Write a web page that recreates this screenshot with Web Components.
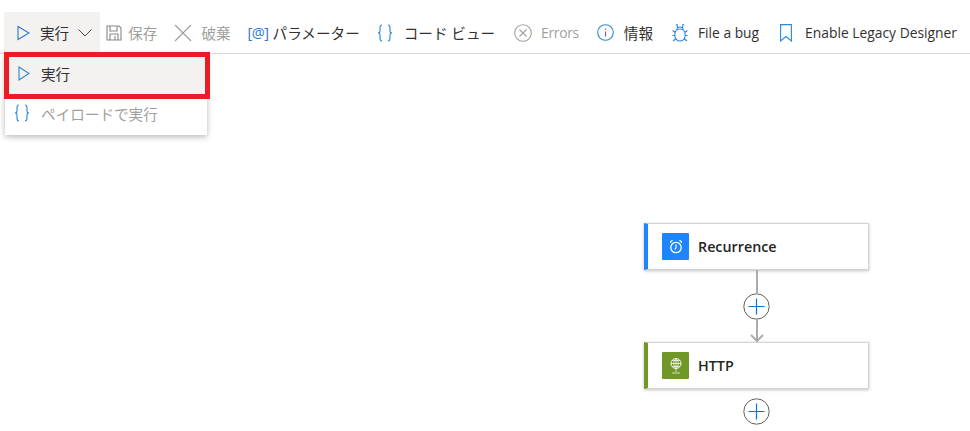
<!DOCTYPE html>
<html lang="ja">
<head>
<meta charset="utf-8">
<title>Designer</title>
<style>
html, body { margin: 0; height: 100%; background: #fff; overflow: hidden; }
body { font-family: "Open Sans", "Noto Sans CJK JP", sans-serif; font-size: 14px; color: #323130; }
svg { display: block; fill: none; }
</style>
</head>
<body>
<template id="bar-tpl">
  <style>
    :host { display: flex; align-items: flex-end; height: 53px; border-bottom: 1px solid #d8d8d8; padding-left: 4px; }
  </style>
  <slot></slot>
</template>
<template id="btn-tpl">
  <style>
    :host { display: flex; align-items: center; height: 41px; gap: var(--gap, 9px); margin-left: var(--ml, 0); white-space: nowrap; color: #323130; font-size: var(--fs, 14.6px); }
    :host([disabled]) { color: #a19f9d; }
    :host([open]) { background: #f3f2f1; padding: 0 8px 0 13px; }
    .label { line-height: 20px; letter-spacing: var(--ls, 0); }
    ::slotted([slot="after"]) { margin-left: -1px; }
  </style>
  <slot name="icon"></slot><span class="label"><slot></slot></span><slot name="after"></slot>
</template>
<template id="menu-tpl">
  <style>
    :host { position: absolute; left: 5px; top: 54px; width: 202px; height: 81px; background: #fff; box-shadow: 0 2px 6px rgba(0,0,0,.28); display: block; z-index: 2; font-size: 14.6px; }
    .hl { position: absolute; left: -1px; top: -2px; width: 206px; height: 47px; box-sizing: border-box; border: 5px solid #ed1c24; background: #f3f2f1; }
    .row { position: relative; display: flex; align-items: center; padding-left: 13px; gap: 11px; }
    .one { height: 41px; margin-top: -1px; }
    .two { position: absolute; top: 39px; left: 0; right: 0; color: #a19f9d; padding-left: 9px; gap: 11px; height: 40px; }
  </style>
  <div class="hl"></div>
  <div class="row one"><slot name="first-icon"></slot><span><slot name="first"></slot></span></div>
  <div class="row two"><slot name="second-icon"></slot><span><slot name="second"></slot></span></div>
</template>
<template id="canvas-tpl">
  <style>
    :host { display: flex; flex-direction: column; align-items: center; width: 225px; margin-left: 644px; padding-top: 169px; }
    .line { width: 2px; background: #adadb0; }
    svg { display: block; fill: none; }
    .plus { flex: none; width: 27px; height: 27px; background: #fff; }
    .head { margin-top: -8px; margin-bottom: 0; }
  </style>
  <slot name="first"></slot>
  <div class="line" style="height:23px"></div>
  <svg class="plus" viewBox="0 0 27 27"><circle cx="13.500" cy="13.500" r="12.700" stroke="#605e5c" fill="#fff"/><path d="M13.500 5.500v16M5.500 13.500h16" stroke="#0078d4" stroke-width="1.200"/></svg>
  <div class="line" style="height:22px"></div>
  <svg class="head" width="14" height="8" viewBox="0 0 14 8"><path d="M1 1l6 6 6-6" stroke="#adadb0" stroke-width="2"/></svg>
  <slot name="second"></slot>
  <div style="height:9px"></div>
  <svg class="plus" viewBox="0 0 27 27"><circle cx="13.500" cy="13.500" r="12.700" stroke="#605e5c" fill="#fff"/><path d="M13.500 5.500v16M5.500 13.500h16" stroke="#0078d4" stroke-width="1.200"/></svg>
</template>
<template id="card-tpl">
  <style>
    :host { display: flex; align-items: center; box-sizing: border-box; width: 225px; height: 47px; background: #fff; border: 1px solid #d4d4d4; border-left: 4px solid var(--accent, #1f85ff); box-shadow: 0 1px 3px rgba(0,0,0,.25); padding-left: 14px; gap: 9px; font-weight: 600; font-size: 14.3px; color: #252423; }
    .tile { width: 27px; height: 27px; border-radius: 1px; background: var(--accent, #1f85ff); display: flex; align-items: center; justify-content: center; }
  </style>
  <div class="tile"><slot name="icon"></slot></div>
  <span><slot></slot></span>
</template>

<tool-bar>
  <tool-button open style="--gap:10px">
    <svg slot="icon" width="13" height="16" viewBox="0 0 13 16"><path d="M1 1.500v13l11-6.500z" stroke="#2b78c5" stroke-width="1.100"/></svg>
    実行
    <svg slot="after" width="14" height="8" viewBox="0 0 14 8"><path d="M.5.500L7 7 13.500.500" stroke="#323130" stroke-width=".9"/></svg>
  </tool-button>
  <tool-button disabled style="--ml:6px;--gap:6px">
    <svg slot="icon" width="16" height="16" viewBox="0 0 16 16"><path d="M1 1h12l2 2v12H1zM4 1v5h7V1M4 15V9h8v6M9 11v4" stroke="#8a8886" stroke-width="1.100"/></svg>
    保存
  </tool-button>
  <tool-button disabled style="--ml:17px;--gap:9px">
    <svg slot="icon" width="18" height="18" viewBox="0 0 18 18"><path d="M1 1l16 16M17 1L1 17" stroke="#a19f9d" stroke-width="1.100"/></svg>
    破棄
  </tool-button>
  <tool-button style="--ml:17px;--gap:5px">
    <span slot="icon" style="color:#2b78c5;font-size:14.500px;line-height:20px;width:20px;letter-spacing:-.5px">[@]</span>
    パラメーター
  </tool-button>
  <tool-button style="--ml:17px;--gap:11px">
    <svg slot="icon" width="16" height="18" viewBox="0 0 16 18"><path d="M5 1C3 1 3 2 3 4v3c0 1-.5 2-2 2 1.500 0 2 1 2 2v3c0 2 0 3 2 3M11 1c2 0 2 1 2 3v3c0 1 .5 2 2 2-1.500 0-2 1-2 2v3c0 2 0 3-2 3" stroke="#2b88d8" stroke-width="1.100"/></svg>
    コード ビュー
  </tool-button>
  <tool-button disabled style="--ml:19px;--gap:9px;--fs:13.800px;--ls:-.3px">
    <svg slot="icon" width="18" height="18" viewBox="0 0 18 18"><circle cx="9" cy="9" r="8.300" stroke="#a19f9d" stroke-width="1.100"/><path d="M5.500 5.500l7 7M12.500 5.500l-7 7" stroke="#a19f9d" stroke-width="1.100"/></svg>
    Errors
  </tool-button>
  <tool-button style="--ml:18px;--gap:10px">
    <svg slot="icon" width="17" height="17" viewBox="0 0 17 17"><circle cx="8.500" cy="8.500" r="7.800" stroke="#2b88d8" stroke-width="1.100"/><path d="M8.500 7.500v5M8.500 4.500v1.200" stroke="#5c5ab0" stroke-width="1.100"/></svg>
    情報
  </tool-button>
  <tool-button style="--ml:19px;--gap:10px;--fs:13.800px">
    <svg slot="icon" width="16" height="18" viewBox="0 0 16 18"><path d="M8 5c3.400 0 5.200 2.500 5.200 6s-2.200 6-5.200 6-5.200-2.500-5.200-6 1.800-6 5.200-6zM4.800 6.500C4.800 4.500 6 3 8 3s3.200 1.500 3.200 3.500M5 .8L5.500 3.500M11 .8L10.500 3.500M3.800 .8h2M10.200 .8h2M3.200 8.500L.6 6.500M12.800 8.500l2.600-2M2.800 11.500H.4M13.200 11.500h2.400M3.500 15L1 17M12.500 15L15 17" stroke="#2b88d8" stroke-width="1.100"/></svg>
    File a bug
  </tool-button>
  <tool-button style="--ml:21px;--gap:13px;--fs:13.850px">
    <svg slot="icon" width="12" height="18" viewBox="0 0 12 18"><path d="M.6.600h10.800v16.400L6 12.500.6 17z" stroke="#2b88d8" stroke-width="1.100"/></svg>
    Enable Legacy Designer
  </tool-button>
</tool-bar>

<run-menu>
  <svg slot="first-icon" width="12" height="15" viewBox="0 0 12 15"><path d="M1 1v13l10-6.500z" stroke="#2b88d8" stroke-width="1.100"/></svg>
  <span slot="first">実行</span>
  <svg slot="second-icon" width="16" height="18" viewBox="0 0 16 18"><path d="M5 1C3 1 3 2 3 4v3c0 1-.5 2-2 2 1.500 0 2 1 2 2v3c0 2 0 3 2 3M11 1c2 0 2 1 2 3v3c0 1 .5 2 2 2-1.500 0-2 1-2 2v3c0 2 0 3-2 3" stroke="#2b88d8" stroke-width="1.100"/></svg>
  <span slot="second">ペイロードで実行</span>
</run-menu>

<flow-canvas>
  <flow-card slot="first" style="--accent:#1f85ff">
    <svg slot="icon" width="14" height="15" viewBox="0 0 14 15"><circle cx="7" cy="8.500" r="5.200" stroke="#fff" stroke-width="1.300"/><path d="M7 5.500v3.300L5.800 10.500M1 3.500L3.500 1.300M13 3.500L10.500 1.300" stroke="#fff" stroke-width="1.200"/></svg>
    Recurrence
  </flow-card>
  <flow-card slot="second" style="--accent:#709727">
    <svg slot="icon" width="12" height="16" viewBox="0 0 12 16"><circle cx="6" cy="5.500" r="5" stroke="#fff" stroke-width=".9"/><path d="M1 5.500h10M6 .5v10M2 2.500h8M2 8.500h8M6 .5c-3 3-3 7 0 10M6 .5c3 3 3 7 0 10M6 10.500v3.500M2 15h8" stroke="#fff" stroke-width=".7"/></svg>
    HTTP
  </flow-card>
</flow-canvas>

<script>
function shadow(el, id) {
    el.attachShadow({mode: 'open'}).appendChild(document.getElementById(id).content.cloneNode(true));
}
customElements.define('tool-bar', class extends HTMLElement {
    constructor() { super(); shadow(this, 'bar-tpl'); }
});
customElements.define('tool-button', class extends HTMLElement {
    constructor() { super(); shadow(this, 'btn-tpl'); }
});
customElements.define('run-menu', class extends HTMLElement {
    constructor() { super(); shadow(this, 'menu-tpl'); }
});
customElements.define('flow-canvas', class extends HTMLElement {
    constructor() { super(); shadow(this, 'canvas-tpl'); }
});
customElements.define('flow-card', class extends HTMLElement {
    constructor() { super(); shadow(this, 'card-tpl'); }
});
</script>
</body>
</html>
